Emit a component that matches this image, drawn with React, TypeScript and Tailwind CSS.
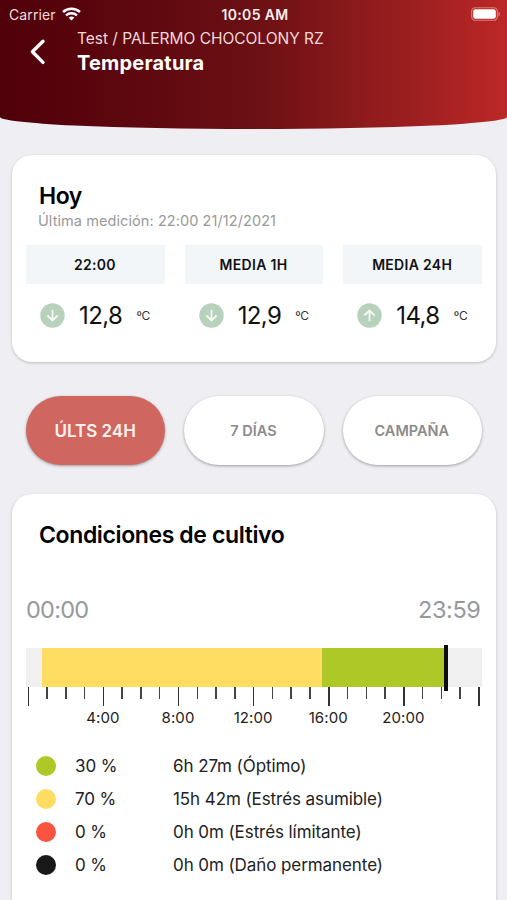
import * as React from "react";

interface Reading {
  label: string;
  value: string;
  trend: "up" | "down";
}

interface Condition {
  color: string;
  percent: string;
  detail: string;
}

const readings: Reading[] = [
  { label: "22:00", value: "12,8", trend: "down" },
  { label: "MEDIA 1H", value: "12,9", trend: "down" },
  { label: "MEDIA 24H", value: "14,8", trend: "up" },
];

const conditions: Condition[] = [
  { color: "bg-[#aec828]", percent: "30 %", detail: "6h 27m (Óptimo)" },
  { color: "bg-[#fedd62]", percent: "70 %", detail: "15h 42m (Estrés asumible)" },
  { color: "bg-[#fb5340]", percent: "0 %", detail: "0h 0m (Estrés límitante)" },
  { color: "bg-[#181818]", percent: "0 %", detail: "0h 0m (Daño permanente)" },
];

const hours = Array.from({ length: 25 }, (_, i) => i);

const StatusBar = () => (
  <div className="grid h-[28px] grid-cols-3 items-center pr-[6px] pl-[9px]">
    <div className="flex items-center gap-[6px]">
      <span className="text-[14px] tracking-[0.1px] text-[#f0dcdc]">Carrier</span>
      <svg width="19" height="14" viewBox="0 0 19 14" fill="none">
        <path d="M1 5C5.7 .5 13.3 .5 18 5" stroke="#fff" strokeWidth="2.5" />
        <path d="M4 8.4C7 5.5 12 5.5 15 8.4" stroke="#fff" strokeWidth="2.3" />
        <path d="M6.7 10.7C8.3 9.2 10.7 9.2 12.3 10.7L9.5 13.6Z" fill="#fff" />
      </svg>
    </div>
    <span className="text-center text-[14px] font-semibold tracking-[0.35px] whitespace-nowrap text-[#fbeeee]">
      10:05 AM
    </span>
    <svg className="justify-self-end" width="30" height="14" viewBox="0 0 30 14">
      <rect x=".7" y=".7" width="25.6" height="12.6" rx="3.6" fill="none" stroke="#dc7c7c" strokeWidth="1.1" />
      <rect x="2.2" y="2.2" width="22.6" height="9.6" rx="2.2" fill="#fff" />
      <path d="M27.4 4.7C29.6 5.5 29.6 8.5 27.4 9.3Z" fill="#dc7070" />
    </svg>
  </div>
);

const Header = () => (
  <header className="h-[129px] rounded-b-[50%_12px] bg-linear-to-r from-[#500009] via-[#6b1014] to-[#bc2827] text-white">
    <StatusBar />
    <div className="flex">
      <svg className="mt-[10px] ml-[29px] shrink-0" width="18" height="28" viewBox="0 0 18 28" fill="none">
        <path d="M14 3.2L3.4 13.8L14 24.4" stroke="#fff" strokeWidth="3.4" strokeLinecap="round" strokeLinejoin="round" />
      </svg>
      <div className="ml-[30px] pt-px whitespace-nowrap">
        <p className="text-[15.5px] leading-5 tracking-[-0.03px] text-[#f0d8d8]">Test / PALERMO CHOCOLONY RZ</p>
        <h1 className="mt-px text-[20px] leading-[26px] font-bold tracking-[0.2px]">Temperatura</h1>
      </div>
    </div>
  </header>
);

const TrendIcon = ({ trend }: { trend: Reading["trend"] }) => (
  <svg className="shrink-0" width="25" height="25" viewBox="0 0 25 25" fill="none">
    <circle cx="12.5" cy="12.5" r="12.2" fill="#b7d1bd" />
    <path
      d={trend === "down" ? "M12.5 6.8V17.6M7.4 12.5L12.5 17.6L17.6 12.5" : "M12.5 18.2V7.4M7.4 12.5L12.5 7.4L17.6 12.5"}
      stroke="#f6fbf6"
      strokeWidth="1.8"
    />
  </svg>
);

const TodayCard = () => (
  <section className="mt-[26px] mr-[11px] ml-[12px] h-[207px] rounded-[20px] bg-white px-[14px] pt-[26px] shadow-[0_1px_3px_rgba(0,0,0,0.22)]">
    <h2 className="pl-[13px] text-[23px] leading-[30px] font-semibold tracking-[-0.5px]">Hoy</h2>
    <p className="pl-[12px] text-[14.5px] leading-5 tracking-[0.08px] text-[#999]">
      Última medición: 22:00 21/12/2021
    </p>
    <div className="mt-[14px] grid grid-cols-3 gap-5">
      {readings.map((r) => (
        <div key={r.label}>
          <div className="flex h-[39px] items-center justify-center bg-[#f3f6f9] pr-px text-[14px] font-semibold tracking-[0.3px] whitespace-nowrap text-[#111]">
            {r.label}
          </div>
          <div className="mt-[18px] flex h-[26px] items-center pl-[14px]">
            <TrendIcon trend={r.trend} />
            <span className="ml-[14px] w-[44px] pt-[2px] text-[24px] tracking-[-0.6px] text-[#111]">{r.value}</span>
            <span className="ml-[13.5px] pt-[2px] text-[12px] tracking-[-0.3px] text-[#333]">ºC</span>
          </div>
        </div>
      ))}
    </div>
  </section>
);

const RangeTabs = () => (
  <nav className="mt-[34px] mr-[25px] ml-[26px] grid h-[69px] grid-cols-3 gap-[19px] font-semibold whitespace-nowrap">
    <button className="rounded-full bg-[#cf6760] pt-[2px] pr-px text-[17px] text-[#fff2ee] shadow-[0_1px_3px_rgba(0,0,0,0.35)]">
      ÚLTS 24H
    </button>
    <button className="rounded-full bg-white pr-px text-[14.5px] text-[#8b8b8b] shadow-[0_1px_3px_rgba(0,0,0,0.35)]">
      7 DÍAS
    </button>
    <button className="rounded-full bg-white pr-px text-[14.5px] text-[#8b8b8b] shadow-[0_1px_3px_rgba(0,0,0,0.35)]">
      CAMPAÑA
    </button>
  </nav>
);

const Timeline = () => (
  <div>
    <div className="relative flex h-[39px] bg-[#f0f0f0]">
      <div className="ml-[16px] w-[279.5px] bg-[#fedd62]" />
      <div className="w-[123px] bg-[#aec828]" />
      <div className="absolute top-[-3px] left-[418px] h-[46px] w-[4px] bg-[#0c0c0c]" />
    </div>
    <div className="flex justify-between pr-[2px] pl-[1.5px]">
      {hours.map((h) => (
        <div key={h} className="flex w-[1.5px] flex-col items-center">
          <div className={h % 4 === 0 ? "h-[19px] w-[1.5px] shrink-0 bg-[#333]" : "h-[12px] w-[1.5px] shrink-0 bg-[#444]"} />
          {h % 4 === 0 && h > 0 && h < 24 && (
            <span className="mt-[1px] pr-px text-[15px] leading-[22px] tracking-[0.1px] text-[#222]">{h}:00</span>
          )}
        </div>
      ))}
    </div>
  </div>
);

const ConditionsCard = () => (
  <section className="mt-[29px] mr-[11px] ml-[12px] h-[440px] rounded-t-[20px] bg-white px-[14px] pt-[26px] shadow-[0_1px_3px_rgba(0,0,0,0.22)]">
    <h2 className="pl-[13px] text-[23px] leading-[30px] font-semibold tracking-[-0.38px]">
      Condiciones de cultivo
    </h2>
    <div className="mt-[45px] flex justify-between pr-[1.5px] text-[23.5px] leading-[30px] text-[#97999c]">
      <span className="tracking-[-0.75px]">00:00</span>
      <span className="tracking-[-0.4px]">23:59</span>
    </div>
    <div className="mt-[23px]">
      <Timeline />
    </div>
    <ul className="mt-[20px]">
      {conditions.map((c) => (
        <li
          key={c.detail}
          className="flex h-[33px] items-center pl-[10px] text-[17px] tracking-[-0.08px] whitespace-nowrap text-[#222]"
        >
          <span className={`size-[20px] rounded-full ${c.color}`} />
          <span className="ml-[19px] w-[98px] pt-[2px]">{c.percent}</span>
          <span className="pt-[2px]">{c.detail}</span>
        </li>
      ))}
    </ul>
  </section>
);

export const App = () => {
  return (
    <main className="h-[900px] w-[507px] overflow-hidden bg-[#efeff3] font-['Inter',sans-serif] text-black">
      <Header />
      <TodayCard />
      <RangeTabs />
      <ConditionsCard />
    </main>
  );
};

export default App;
